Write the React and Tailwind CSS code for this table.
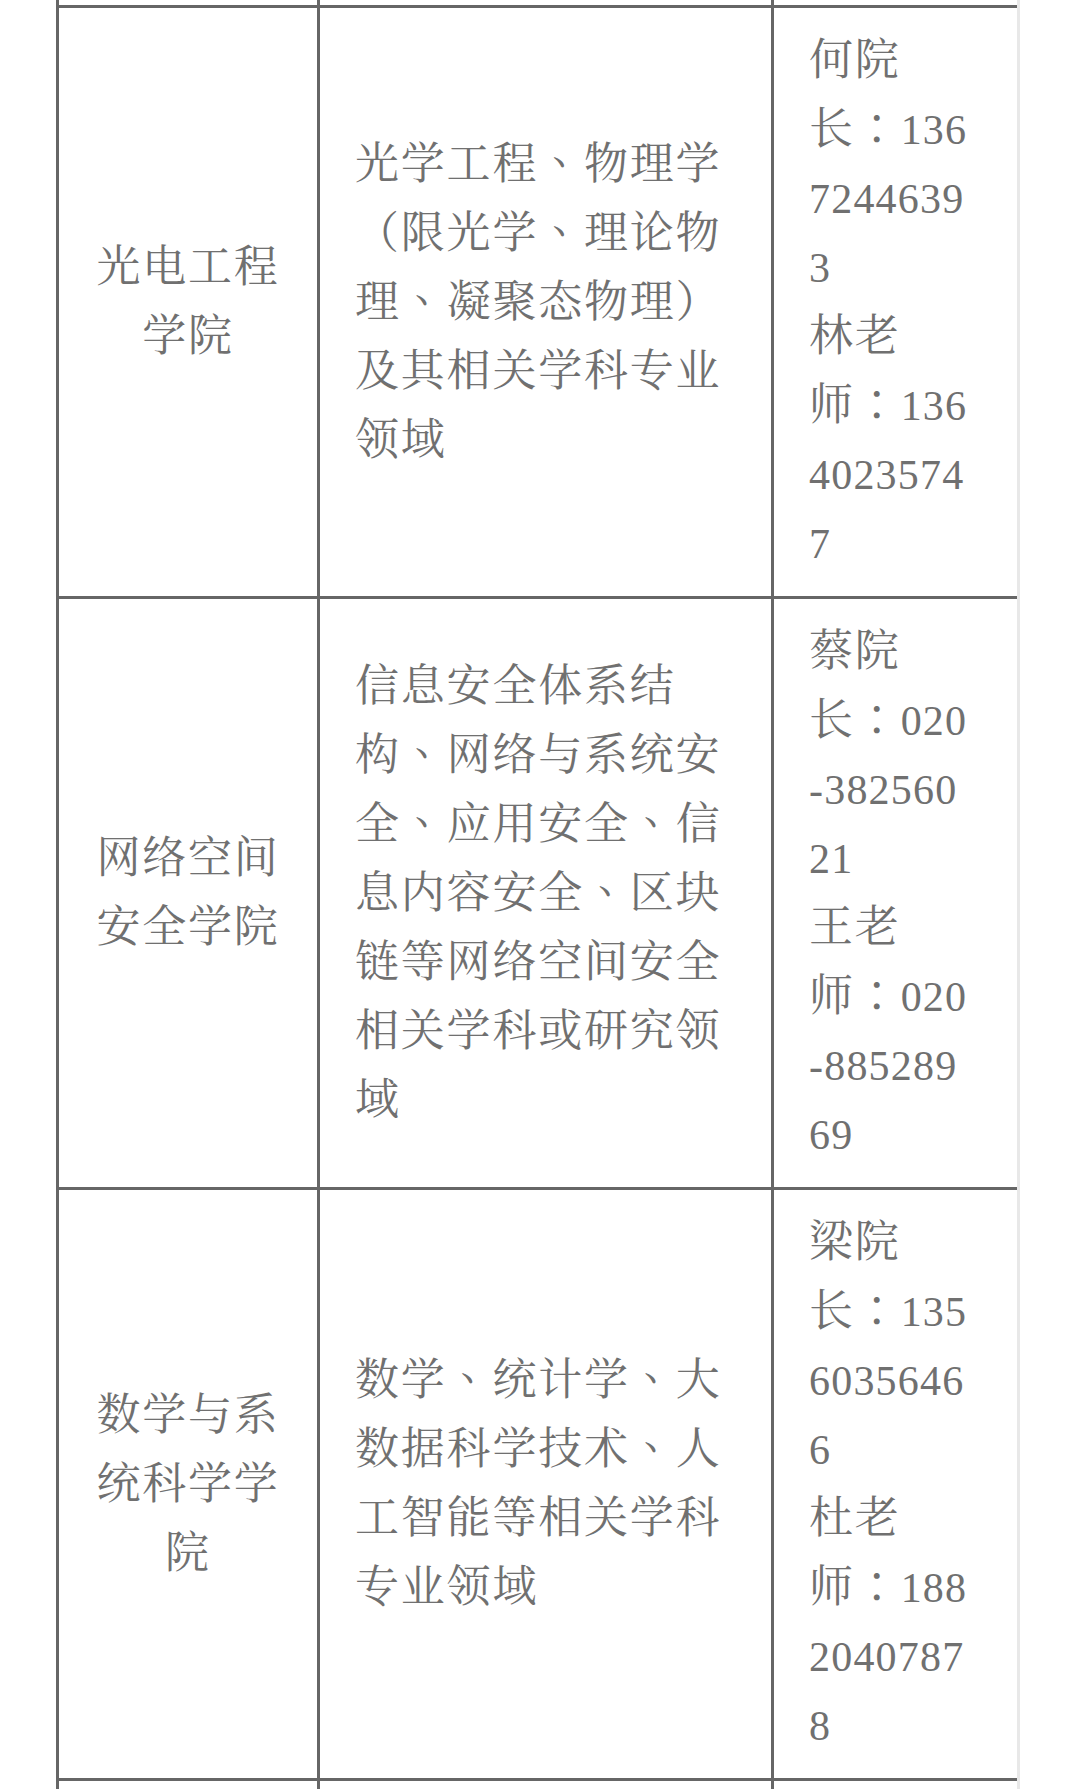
import React from "react";

const rows = [
  {
    name: ["光电工程", "学院"],
    field: [
      "光学工程、物理学",
      "（限光学、理论物",
      "理、凝聚态物理）",
      "及其相关学科专业",
      "领域",
    ],
    contact: ["何院", "长：136", "7244639", "3", "林老", "师：136", "4023574", "7"],
  },
  {
    name: ["网络空间", "安全学院"],
    field: [
      "信息安全体系结",
      "构、网络与系统安",
      "全、应用安全、信",
      "息内容安全、区块",
      "链等网络空间安全",
      "相关学科或研究领",
      "域",
    ],
    contact: ["蔡院", "长：020", "-382560", "21", "王老", "师：020", "-885289", "69"],
  },
  {
    name: ["数学与系", "统科学学", "院"],
    field: [
      "数学、统计学、大",
      "数据科学技术、人",
      "工智能等相关学科",
      "专业领域",
    ],
    contact: ["梁院", "长：135", "6035646", "6", "杜老", "师：188", "2040787", "8"],
  },
];

// digits a touch narrower than the CJK run; 、 and ： centred in their box
function Line({ text }) {
  const parts = text.split(/([0-9-]+|[、：])/).filter(Boolean);
  return (
    <div className="h-[69px] whitespace-nowrap">
      {parts.map((p, i) => {
        if (/[0-9-]/.test(p))
          return (
            <span key={i} className="text-[42px] leading-[0] tracking-[1.2px]">
              {p}
            </span>
          );
        if (p === "、" || p === "：")
          return (
            <span
              key={i}
              className="leading-[0] font-[family-name:'Noto_Serif_CJK_TC','Noto_Sans_CJK_TC',serif]"
            >
              {p}
            </span>
          );
        return <span key={i}>{p}</span>;
      })}
    </div>
  );
}

function StubRow({ bottom }) {
  return (
    <div className={`flex h-[8px] ${bottom ? "" : "border-b-[3px] border-[#666]"}`}>
      <div className="w-[264px] border-x-[3px] border-[#666]" />
      <div className="w-[454px] border-r-[3px] border-[#666]" />
      <div className="w-[243px]" />
    </div>
  );
}

export default function App() {
  return (
    <div className="w-[1080px] h-[1789px] overflow-hidden bg-white pl-[56px] text-[#707070] text-[44px] leading-[69px] tracking-[1.8px] font-[family-name:'Liberation_Serif','Noto_Serif_CJK_SC','Noto_Sans_CJK_SC',serif]">
      <div className="w-[964px] h-full border-r-[3px] border-[#e8e8e8]">
        <StubRow />
        {rows.map((r, idx) => (
          <div key={idx} className="flex h-[591px] border-b-[3px] border-[#666]">
            <div className="w-[264px] border-x-[3px] border-[#666] flex flex-col items-center justify-center text-center">
              {r.name.map((t, i) => (
                <Line key={i} text={t} />
              ))}
            </div>
            <div className="w-[454px] border-r-[3px] border-[#666] flex flex-col justify-center pl-[35px]">
              {r.field.map((t, i) => (
                <Line key={i} text={t} />
              ))}
            </div>
            <div className="w-[243px] pl-[35px] pt-[18px]">
              {r.contact.map((t, i) => (
                <Line key={i} text={t} />
              ))}
            </div>
          </div>
        ))}
        <StubRow bottom />
      </div>
    </div>
  );
}
